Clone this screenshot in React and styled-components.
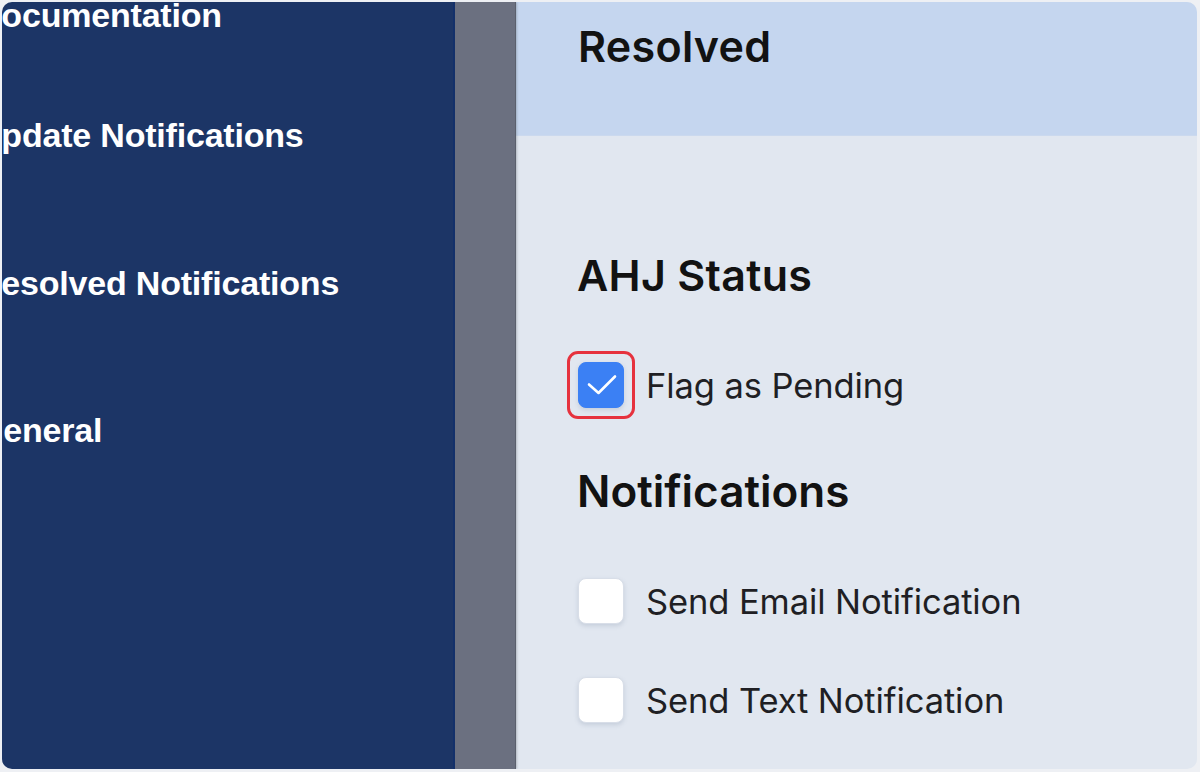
import React from "react";
import styled, { createGlobalStyle } from "styled-components";

const Global = createGlobalStyle`
  html, body { margin: 0; padding: 0; background: #eef0f4; }
  * { box-sizing: border-box; }
`;

const Frame = styled.div`
  width: 1200px;
  height: 772px;
  padding: 2px 3px 3px 2px;
  background: #eef0f4;
`;

const Window = styled.div`
  display: flex;
  height: 100%;
  border-radius: 10px;
  overflow: hidden;
`;

const Sidebar = styled.nav`
  flex: 0 0 453px;
  background: #1c3566;
  border-right: 2px solid #13306a;
  overflow: hidden;
  display: flex;
  flex-direction: column;
  font-family: "Liberation Sans", Arial, sans-serif;
`;

const NavItem = styled.div`
  margin-top: ${(p) => p.$top}px;
  margin-left: -25px;
  white-space: nowrap;
  color: #ffffff;
  font-size: 34px;
  font-weight: 700;
  line-height: 38px;
  letter-spacing: -0.2px;
`;

const Rail = styled.div`
  flex: 0 0 61px;
  background: #6b7080;
  border-right: 1px solid #5b606d;
  box-shadow: 1px 0 2px rgba(90, 96, 110, 0.35);
  position: relative;
  z-index: 1;
`;

const Main = styled.main`
  flex: 1;
  display: flex;
  flex-direction: column;
  background: #e1e7f0;
  font-family: Inter, "Noto Sans", sans-serif;
  color: #141414;
`;

const Header = styled.header`
  height: 134px;
  flex: 0 0 134px;
  background: #c5d6ef;
  border-bottom: 1px solid #cbd9ee;
  padding: 19px 0 0 62px;
`;

const Title = styled.h1`
  margin: 0;
  font-size: 43px;
  font-weight: 600;
  line-height: 51px;
  letter-spacing: 0.3px;
  color: #121212;
`;

const Body = styled.section`
  padding: 114px 0 0 62px;
  display: flex;
  flex-direction: column;
`;

const SectionTitle = styled.h2`
  margin: ${(p) => p.$top}px 0 0 -1px;
  font-size: ${(p) => p.$size}px;
  font-weight: 600;
  line-height: ${(p) => p.$size + 8}px;
  letter-spacing: ${(p) => p.$track}px;
  color: #121212;
`;

const Row = styled.label`
  display: flex;
  align-items: center;
  gap: 22px;
  margin-top: ${(p) => p.$top}px;
  height: 46px;
  font-size: 34.5px;
  color: #1f1f24;
  letter-spacing: -0.1px;
`;

const BoxWrap = styled.span`
  position: relative;
  display: inline-flex;
  width: 46px;
  height: 46px;
  flex: 0 0 46px;
`;

const Box = styled.span`
  position: relative;
  width: 46px;
  height: 46px;
  border-radius: 8px;
  background: ${(p) => (p.$checked ? "#3b80f4" : "#ffffff")};
  border: 1px solid ${(p) => (p.$checked ? "#3b80f4" : "#d8dee8")};
  box-shadow: 0 2px 4px rgba(120, 135, 160, 0.25);
`;

const Tick = styled.svg`
  position: absolute;
  left: -1px;
  top: -1px;
`;

const FocusRing = styled.span`
  position: absolute;
  left: -11px;
  top: -11px;
  right: -11px;
  bottom: -11px;
  border: 3px solid #e6323e;
  border-radius: 11px;
  pointer-events: none;
`;

const Check = () => (
  <Tick width="46" height="46" viewBox="0 0 46 46" fill="none">
    <path
      d="M11 22.5l9.5 8.5L37 14.5"
      stroke="#ffffff"
      strokeWidth="2.6"
      strokeLinecap="round"
      strokeLinejoin="round"
    />
  </Tick>
);

const Checkbox = ({ checked, focused }) => (
  <BoxWrap>
    <Box $checked={checked}>{checked && <Check />}</Box>
    {focused && <FocusRing />}
  </BoxWrap>
);

const navItems = [
  { label: "Documentation", top: -6 },
  { label: "Update Notifications", top: 82 },
  { label: "Resolved Notifications", top: 110 },
  { label: "General", top: 109 },
];

export default function App() {
  return (
    <>
      <Global />
      <Frame>
        <Window>
          <Sidebar>
            {navItems.map((n) => (
              <NavItem key={n.label} $top={n.top}>
                {n.label}
              </NavItem>
            ))}
          </Sidebar>
          <Rail />
          <Main>
            <Header>
              <Title>Resolved</Title>
            </Header>
            <Body>
              <SectionTitle $size={43} $track={0.3} $top={0}>
                AHJ Status
              </SectionTitle>
              <Row $top={61}>
                <Checkbox checked focused />
                Flag as Pending
              </Row>
              <SectionTitle $size={44} $track={0} $top={57}>
                Notifications
              </SectionTitle>
              <Row $top={61}>
                <Checkbox />
                Send Email Notification
              </Row>
              <Row $top={53}>
                <Checkbox />
                Send Text Notification
              </Row>
            </Body>
          </Main>
        </Window>
      </Frame>
    </>
  );
}
